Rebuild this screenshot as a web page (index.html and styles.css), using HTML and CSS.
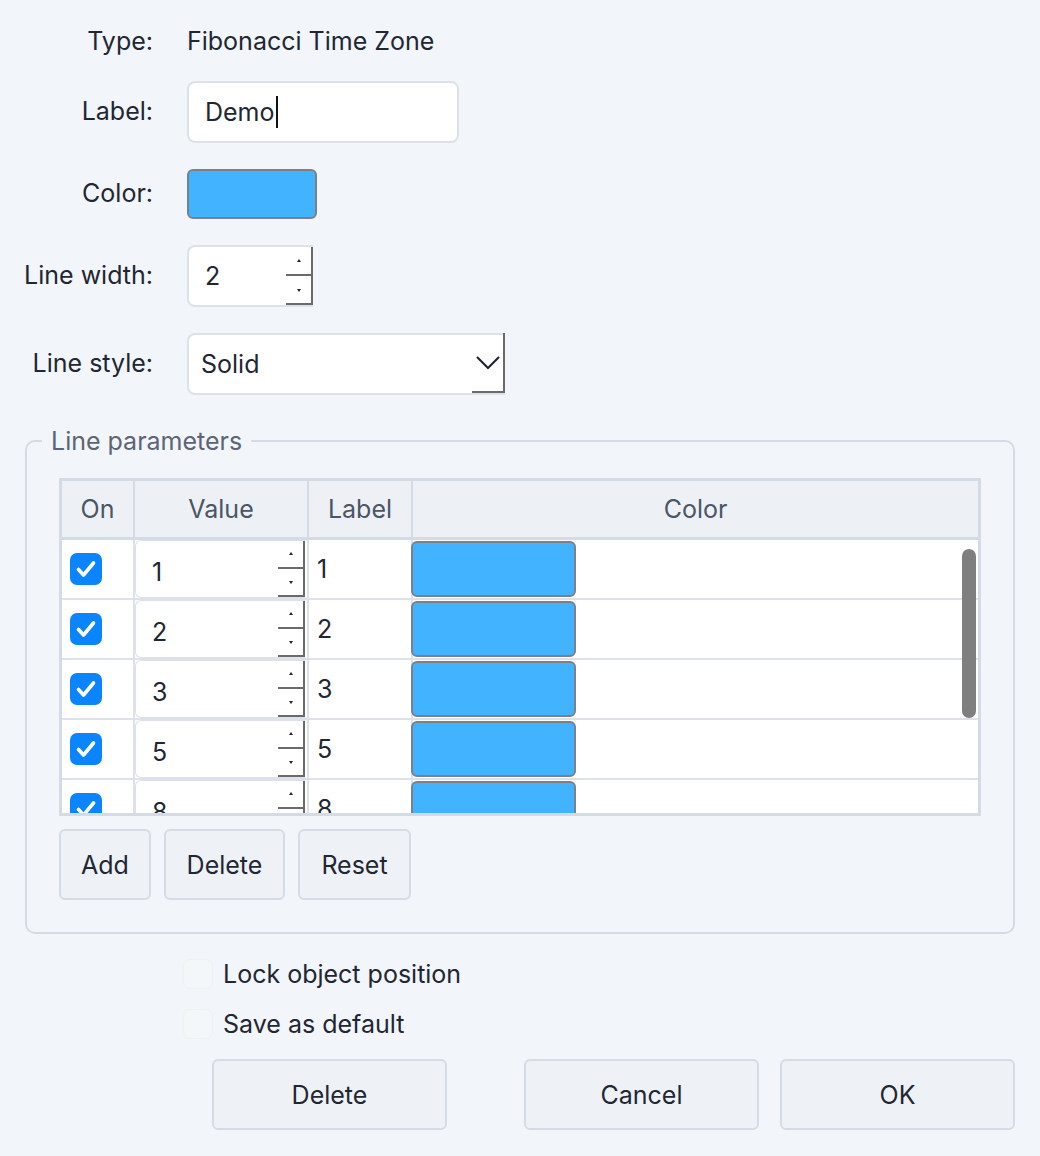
FILE: index.html
```html
<!DOCTYPE html>
<html lang="en">
<head>
<meta charset="utf-8">
<title>Fibonacci Time Zone</title>
<link rel="stylesheet" href="styles.css">
</head>
<body>
<div class="dialog">
  <div class="form-grid">
    <div class="lbl first">Type:</div>
    <div class="val type-val first">Fibonacci Time Zone</div>

    <div class="lbl">Label:</div>
    <div class="val"><div class="text-input">Demo<span class="caret"></span></div></div>

    <div class="lbl">Color:</div>
    <div class="val"><div class="swatch"></div></div>

    <div class="lbl">Line width:</div>
    <div class="val">
      <div class="spin-input lw"><span class="num">2</span><span class="spin"><span class="up"></span><span class="dn"></span></span></div>
    </div>

    <div class="lbl">Line style:</div>
    <div class="val">
      <div class="select"><span>Solid</span><span class="sel-btn"><svg width="26" height="16" viewBox="0 0 26 16"><polyline points="2,3 13,14 24,3" fill="none" stroke="#1f2733" stroke-width="2.2"/></svg></span></div>
    </div>
  </div>

  <fieldset class="params">
    <legend>Line parameters</legend>
    <div class="table">
      <div class="thead">
        <div class="th">On</div>
        <div class="th">Value</div>
        <div class="th">Label</div>
        <div class="th last">Color</div>
      </div>
      <div class="tbody">
        <div class="tr">
          <div class="td on"><span class="cb"><svg width="32" height="32" viewBox="0 0 32 32"><polyline points="8.5,16.5 13.5,22 23.5,10" fill="none" stroke="#fff" stroke-width="3.6" stroke-linecap="round" stroke-linejoin="round"/></svg></span></div>
          <div class="td value"><div class="spin-input cell"><span class="num">1</span><span class="spin"><span class="up"></span><span class="dn"></span></span></div></div>
          <div class="td label">1</div>
          <div class="td color"><div class="swatch small"></div></div>
        </div>
        <div class="tr">
          <div class="td on"><span class="cb"><svg width="32" height="32" viewBox="0 0 32 32"><polyline points="8.5,16.5 13.5,22 23.5,10" fill="none" stroke="#fff" stroke-width="3.6" stroke-linecap="round" stroke-linejoin="round"/></svg></span></div>
          <div class="td value"><div class="spin-input cell"><span class="num">2</span><span class="spin"><span class="up"></span><span class="dn"></span></span></div></div>
          <div class="td label">2</div>
          <div class="td color"><div class="swatch small"></div></div>
        </div>
        <div class="tr">
          <div class="td on"><span class="cb"><svg width="32" height="32" viewBox="0 0 32 32"><polyline points="8.5,16.5 13.5,22 23.5,10" fill="none" stroke="#fff" stroke-width="3.6" stroke-linecap="round" stroke-linejoin="round"/></svg></span></div>
          <div class="td value"><div class="spin-input cell"><span class="num">3</span><span class="spin"><span class="up"></span><span class="dn"></span></span></div></div>
          <div class="td label">3</div>
          <div class="td color"><div class="swatch small"></div></div>
        </div>
        <div class="tr">
          <div class="td on"><span class="cb"><svg width="32" height="32" viewBox="0 0 32 32"><polyline points="8.5,16.5 13.5,22 23.5,10" fill="none" stroke="#fff" stroke-width="3.6" stroke-linecap="round" stroke-linejoin="round"/></svg></span></div>
          <div class="td value"><div class="spin-input cell"><span class="num">5</span><span class="spin"><span class="up"></span><span class="dn"></span></span></div></div>
          <div class="td label">5</div>
          <div class="td color"><div class="swatch small"></div></div>
        </div>
        <div class="tr">
          <div class="td on"><span class="cb"><svg width="32" height="32" viewBox="0 0 32 32"><polyline points="8.5,16.5 13.5,22 23.5,10" fill="none" stroke="#fff" stroke-width="3.6" stroke-linecap="round" stroke-linejoin="round"/></svg></span></div>
          <div class="td value"><div class="spin-input cell"><span class="num">8</span><span class="spin"><span class="up"></span><span class="dn"></span></span></div></div>
          <div class="td label">8</div>
          <div class="td color"><div class="swatch small"></div></div>
        </div>
        <div class="scroll-thumb"></div>
      </div>
    </div>
    <div class="btn-row">
      <button class="btn add">Add</button>
      <button class="btn del">Delete</button>
      <button class="btn reset">Reset</button>
    </div>
  </fieldset>

  <div class="checks">
    <label class="check"><span class="faint-box"></span>Lock object position</label>
    <label class="check"><span class="faint-box"></span>Save as default</label>
  </div>

  <div class="actions">
    <button class="btn big">Delete</button>
    <button class="btn big cancel">Cancel</button>
    <button class="btn big ok">OK</button>
  </div>
</div>
</body>
</html>
```

FILE: styles.css
```css
* { box-sizing: border-box; }

html, body {
  margin: 0;
  padding: 0;
  background: #f2f5f9;
}

body {
  font-family: Inter, "Noto Sans", sans-serif;
  font-size: 25px;
  color: #1f2733;
}

.dialog {
  width: 1040px;
  padding: 0 25px 0 25px;
}

/* top form */
.form-grid {
  display: grid;
  grid-template-columns: 128px 1fr;
  column-gap: 34px;
  row-gap: 26px;
  padding-top: 19px;
  align-items: center;
}

.lbl {
  text-align: right;
  white-space: nowrap;
  padding-bottom: 3px;
  margin-left: -6px;
}

.first {
  height: 36px;
  padding: 8px 0 0 0;
  line-height: 28px;
}

.val { display: flex; }

.text-input {
  width: 272px;
  height: 62px;
  background: #fff;
  border: 2px solid #dde2ea;
  border-radius: 8px;
  padding-left: 16px;
  display: flex;
  align-items: center;
}

.caret {
  display: inline-block;
  width: 2px;
  height: 32px;
  background: #111;
  margin-left: 1px;
}

.swatch {
  width: 130px;
  height: 50px;
  background: #42b4ff;
  border: 2px solid #7a818c;
  border-radius: 6px;
}

.spin-input {
  display: flex;
  align-items: center;
  background: #fff;
  border: 2px solid #dde2ea;
  border-right: none;
  border-radius: 8px 0 0 8px;
}

.spin-input .num { flex: 1; padding-left: 16px; }

.spin-input.lw {
  width: 126px;
  height: 62px;
}

.spin {
  width: 27px;
  align-self: stretch;
  display: flex;
  flex-direction: column;
}

.spin .up, .spin .dn {
  flex: 1;
  position: relative;
  border-right: 2px solid #6a6a6a;
  border-bottom: 2px solid #6a6a6a;
}

.spin .up::after, .spin .dn::after {
  content: "";
  position: absolute;
  left: 50%;
  top: 50%;
  margin-left: -2px;
  border-left: 2.5px solid transparent;
  border-right: 2.5px solid transparent;
}

.spin .up::after { border-bottom: 3px solid #222; margin-top: -2px; }
.spin .dn::after { border-top: 3px solid #222; margin-top: -1px; }

.select {
  width: 318px;
  height: 62px;
  background: #fff;
  border: 2px solid #dde2ea;
  border-right: none;
  border-radius: 8px 0 0 8px;
  display: flex;
  align-items: center;
  padding-left: 12px;
}

.select span:first-child { flex: 1; }

.sel-btn {
  width: 33px;
  align-self: stretch;
  border-right: 2px solid #6a6a6a;
  border-bottom: 2px solid #6a6a6a;
  display: flex;
  align-items: center;
  justify-content: center;
  margin-top: -2px;
}

/* fieldset */
.params {
  margin: 31px 0 0 0;
  width: 990px;
  border: 2px solid #d5dbe5;
  border-radius: 10px;
  padding: 22px 32px 32px 32px;
}

.params legend {
  color: #5b6575;
  padding: 0 9px;
  margin-left: -17px;
  line-height: 30px;
}

.table {
  width: 922px;
  border: 3px solid #d5dbe5;
  background: #fff;
}

.thead {
  display: grid;
  grid-template-columns: 73px 174px 104px 1fr;
  height: 59px;
  background: #edf1f6;
  border-bottom: 3px solid #d5dbe5;
  color: #4b5565;
}

.th {
  display: flex;
  align-items: center;
  justify-content: center;
  border-right: 2px solid #d5dbe5;
}

.th.last { border-right: none; }

.tbody {
  position: relative;
  height: 273px;
  overflow: hidden;
}

.tr {
  display: grid;
  grid-template-columns: 73px 174px 104px 1fr;
  height: 60px;
  border-bottom: 2px solid #dde2ea;
}

.td {
  display: flex;
  align-items: center;
  border-right: 2px solid #dde2ea;
}

.td.color { border-right: none; }

.td.on { padding-left: 8px; }

.cb {
  width: 32px;
  height: 32px;
  border-radius: 7px;
  background: #0a84ff;
  display: block;
}

.cb svg { display: block; }

.td.value { padding-right: 2px; align-items: stretch; }

.spin-input.cell {
  flex: 1;
  border-width: 1px;
  border-radius: 6px 0 0 6px;
}

.spin-input.cell .num { padding-top: 6px; }

.td.label { padding-left: 8px; }

.swatch.small {
  width: 165px;
  height: 56px;
  margin-left: -2px;
}

.scroll-thumb {
  position: absolute;
  right: 2px;
  top: 9px;
  width: 14px;
  height: 169px;
  border-radius: 7px;
  background: #7f7f7f;
}

/* buttons */
.btn {
  font-family: inherit;
  font-size: 25px;
  color: #1f2733;
  background: #eef2f7;
  border: 2px solid #d6dce5;
  border-radius: 6px;
  height: 71px;
  padding: 0;
}

.btn-row {
  display: flex;
  gap: 13px;
  margin-top: 13px;
}

.btn.add { width: 92px; }
.btn.del { width: 121px; }
.btn.reset { width: 113px; }

.checks {
  padding-left: 158px;
  padding-top: 15px;
}

.check {
  display: flex;
  align-items: center;
  height: 50px;
  gap: 10px;
}

.faint-box {
  width: 30px;
  height: 30px;
  border-radius: 7px;
  background: #f4f7fa;
  border: 1px solid #eef1f5;
}

.actions {
  display: flex;
  margin-top: 10px;
  padding-left: 187px;
}

.btn.big { width: 235px; }
.btn.cancel { margin-left: 77px; }
.btn.ok { margin-left: 21px; }
```
